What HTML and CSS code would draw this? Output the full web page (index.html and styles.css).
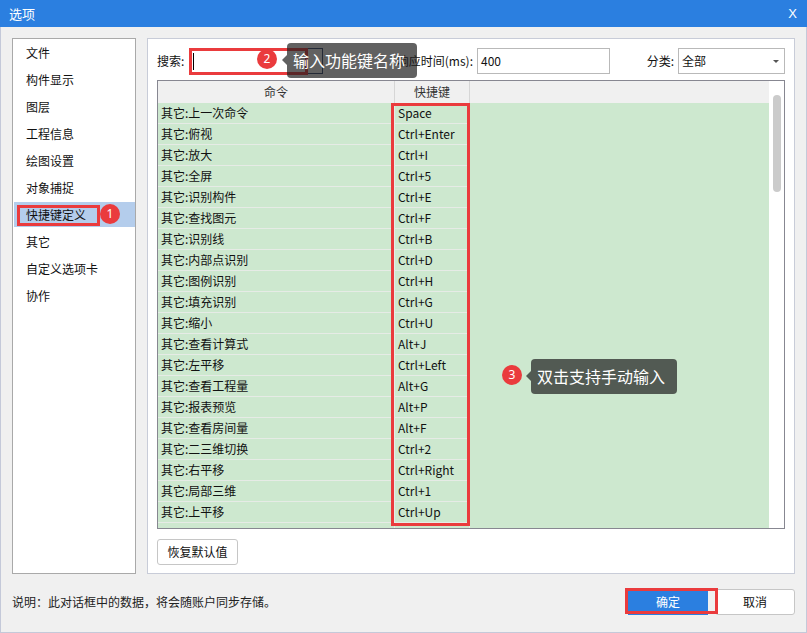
FILE: index.html
```html
<!DOCTYPE html>
<html lang="zh-CN">
<head>
<meta charset="utf-8">
<title>选项</title>
<link rel="stylesheet" href="styles.css">
</head>
<body>
<div class="window">
  <div class="titlebar"><span class="title">选项</span><span class="close">X</span></div>
  <div class="frame">
    <div class="main">
      <div class="nav">
        <div class="nav-item">文件</div>
        <div class="nav-item">构件显示</div>
        <div class="nav-item">图层</div>
        <div class="nav-item">工程信息</div>
        <div class="nav-item">绘图设置</div>
        <div class="nav-item">对象捕捉</div>
        <div class="nav-item active">快捷键定义<span class="mark nav-mark"></span><span class="badge nav-badge">1</span></div>
        <div class="nav-item">其它</div>
        <div class="nav-item">自定义选项卡</div>
        <div class="nav-item">协作</div>
      </div>
      <div class="panel">
        <div class="search-row">
          <span class="lbl lbl-search">搜索:</span>
          <div class="input input-search"><span class="caret"></span></div>
          <span class="lbl lbl-rt">响应时间(ms):</span>
          <div class="input input-rt">400</div>
          <span class="lbl lbl-cat">分类:</span>
          <div class="select">全部<span class="arrow"></span></div>
        </div>
        <div class="table">
          <div class="grid">
            <div class="thead">
              <div class="th th-cmd">命令</div>
              <div class="th th-key">快捷键</div>
              <div class="th th-rest"></div>
            </div>
            <div class="rows">
              <div class="row"><div class="td cmd">其它:上一次命令</div><div class="td key">Space</div><div class="td rest"></div></div>
              <div class="row"><div class="td cmd">其它:俯视</div><div class="td key">Ctrl+Enter</div><div class="td rest"></div></div>
              <div class="row"><div class="td cmd">其它:放大</div><div class="td key">Ctrl+I</div><div class="td rest"></div></div>
              <div class="row"><div class="td cmd">其它:全屏</div><div class="td key">Ctrl+5</div><div class="td rest"></div></div>
              <div class="row"><div class="td cmd">其它:识别构件</div><div class="td key">Ctrl+E</div><div class="td rest"></div></div>
              <div class="row"><div class="td cmd">其它:查找图元</div><div class="td key">Ctrl+F</div><div class="td rest"></div></div>
              <div class="row"><div class="td cmd">其它:识别线</div><div class="td key">Ctrl+B</div><div class="td rest"></div></div>
              <div class="row"><div class="td cmd">其它:内部点识别</div><div class="td key">Ctrl+D</div><div class="td rest"></div></div>
              <div class="row"><div class="td cmd">其它:图例识别</div><div class="td key">Ctrl+H</div><div class="td rest"></div></div>
              <div class="row"><div class="td cmd">其它:填充识别</div><div class="td key">Ctrl+G</div><div class="td rest"></div></div>
              <div class="row"><div class="td cmd">其它:缩小</div><div class="td key">Ctrl+U</div><div class="td rest"></div></div>
              <div class="row"><div class="td cmd">其它:查看计算式</div><div class="td key">Alt+J</div><div class="td rest"></div></div>
              <div class="row"><div class="td cmd">其它:左平移</div><div class="td key">Ctrl+Left</div><div class="td rest"></div></div>
              <div class="row"><div class="td cmd">其它:查看工程量</div><div class="td key">Alt+G</div><div class="td rest"></div></div>
              <div class="row"><div class="td cmd">其它:报表预览</div><div class="td key">Alt+P</div><div class="td rest"></div></div>
              <div class="row"><div class="td cmd">其它:查看房间量</div><div class="td key">Alt+F</div><div class="td rest"></div></div>
              <div class="row"><div class="td cmd">其它:二三维切换</div><div class="td key">Ctrl+2</div><div class="td rest"></div></div>
              <div class="row"><div class="td cmd">其它:右平移</div><div class="td key">Ctrl+Right</div><div class="td rest"></div></div>
              <div class="row"><div class="td cmd">其它:局部三维</div><div class="td key">Ctrl+1</div><div class="td rest"></div></div>
              <div class="row"><div class="td cmd">其它:上平移</div><div class="td key">Ctrl+Up</div><div class="td rest"></div></div>
              <div class="row"><div class="td cmd"></div><div class="td key"></div><div class="td rest"></div></div>
            </div>
          </div>
          <div class="vscroll"><div class="thumb"></div></div>
          <span class="mark key-mark"></span>
          <span class="badge badge-3">3</span>
          <div class="tip tip-3">双击支持手动输入</div>
        </div>
        <div class="btn restore">恢复默认值</div>
        <span class="mark search-mark"></span>
        <span class="badge badge-2">2</span>
        <div class="tip tip-2">输入功能键名称</div>
      </div>
    </div>
    <div class="footer">
      <span class="note">说明：此对话框中的数据，将会随账户同步存储。</span>
      <div class="actions">
        <div class="btn ok">确定</div>
        <div class="btn cancel">取消</div>
      </div>
      <span class="mark ok-mark"></span>
    </div>
  </div>
</div>
</body>
</html>
```

FILE: styles.css
```css
* { box-sizing: border-box; }

html, body {
  margin: 0;
  padding: 0;
}

body {
  font-family: "Noto Sans CJK SC", "Noto Sans", sans-serif;
  font-size: 12px;
  color: #111;
  background: #f0f0f0;
}

.window {
  width: 807px;
  height: 633px;
  display: flex;
  flex-direction: column;
  background: #f0f0f0;
}

.titlebar {
  height: 27px;
  flex: none;
  background: #2b7fe0;
  color: #fff;
  display: flex;
  align-items: center;
  justify-content: space-between;
  padding: 0 10px 0 9px;
}

.title {
  font-size: 13px;
  line-height: 27px;
}

.close {
  font-family: "Liberation Sans", sans-serif;
  font-size: 13px;
  line-height: 27px;
}

.frame {
  flex: 1;
  border: 1px solid #c4c9d9;
  border-top: none;
  padding: 11px 11px 0 11px;
  display: flex;
  flex-direction: column;
}

.main {
  height: 536px;
  display: flex;
  gap: 11px;
}

/* left navigation */
.nav {
  width: 124px;
  border: 1px solid #a9a9a9;
  background: #fff;
  padding-top: 1px;
}

.nav-item {
  position: relative;
  height: 25px;
  line-height: 25px;
  margin: 0 0 2px 1px;
  padding-left: 12px;
  white-space: nowrap;
}

.nav-item.active {
  background: #b4cdec;
}

/* right panel */
.panel {
  position: relative;
  flex: 1;
  border: 1px solid #c8ccd8;
  background: #fff;
  padding: 9px 9px 0 9px;
}

.search-row {
  height: 26px;
  display: flex;
  align-items: center;
}

.lbl {
  line-height: 26px;
  white-space: nowrap;
}

.lbl-search { width: 33px; }
.lbl-rt { width: 154px; text-align: right; padding-right: 4px; }
.lbl-cat { width: 68px; text-align: right; padding-right: 4px; }

.input {
  height: 26px;
  line-height: 24px;
  border: 1px solid #b9b9b9;
  padding-left: 3px;
  background: #fff;
}

.input-search {
  width: 133px;
  border-color: #2f4470;
  position: relative;
}

.caret {
  position: absolute;
  left: 2px;
  top: 4px;
  width: 1px;
  height: 17px;
  background: #000;
}

.input-rt { width: 133px; }

.select {
  position: relative;
  width: 107px;
  height: 26px;
  line-height: 24px;
  border: 1px solid #b9b9b9;
  padding-left: 3px;
  background: #fff;
}

.arrow {
  position: absolute;
  right: 5px;
  top: 11px;
  width: 0;
  height: 0;
  border-left: 3px solid transparent;
  border-right: 3px solid transparent;
  border-top: 3px solid #555;
}

/* table */
.table {
  position: relative;
  margin-top: 6px;
  height: 449px;
  border: 1px solid #878791;
  display: flex;
  background: #fff;
}

.grid {
  flex: 1;
  overflow: hidden;
  display: flex;
  flex-direction: column;
}

.thead {
  height: 22px;
  flex: none;
  display: grid;
  grid-template-columns: 237px 75px 1fr;
  background: #f0f0f0;
  color: #333;
}

.th {
  line-height: 22px;
  text-align: center;
}

.th-cmd, .th-key { border-right: 1px solid #d6d6d6; }

.rows {
  flex: 1;
  overflow: hidden;
  background: #cde8cf;
}

.row {
  display: grid;
  grid-template-columns: 237px 75px 1fr;
  height: 21px;
}

.td {
  line-height: 20px;
  white-space: nowrap;
  padding-left: 3px;
}

.td.cmd, .td.key {
  border-bottom: 1px solid #e6ebe6;
  border-right: 1px solid #e6ebe6;
}

.vscroll {
  width: 15px;
  flex: none;
  background: #fff;
  padding: 14px 0 0 4px;
}

.thumb {
  width: 8px;
  height: 97px;
  border-radius: 4px;
  background: #cbcbcb;
}

.btn {
  height: 26px;
  line-height: 24px;
  text-align: center;
  border: 1px solid #c6c6c6;
  border-radius: 3px;
  background: #fff;
}

.restore {
  margin-top: 10px;
  width: 81px;
}

/* footer */
.footer {
  position: relative;
  flex: 1;
  display: flex;
  justify-content: space-between;
  align-items: flex-start;
  padding-top: 15px;
}

.note {
  line-height: 26px;
  color: #222;
}

.actions {
  display: flex;
  gap: 7px;
}

.ok {
  width: 80px;
  background: #2b7fe0;
  border-color: #2b7fe0;
  border-radius: 0;
  color: #fff;
}

.cancel {
  width: 80px;
}

/* annotations */
.mark {
  position: absolute;
  border: 3px solid #ea3b3d;
}

.nav-mark { left: 3px; top: 3px; width: 83px; height: 21px; }
.search-mark { left: 41px; top: 9px; width: 119px; height: 27px; }
.key-mark { left: 233px; top: 22px; width: 79px; height: 423px; }
.ok-mark { left: 613px; top: 14px; width: 93px; height: 26px; }

.badge {
  position: absolute;
  width: 20px;
  height: 20px;
  border-radius: 50%;
  background: #ea3b3d;
  color: #fff;
  font-family: "Noto Sans", sans-serif;
  font-size: 12px;
  line-height: 20px;
  text-align: center;
}

.nav-badge { left: 86px; top: 2px; }
.badge-2 { left: 109px; top: 10px; }
.badge-3 { left: 344px; top: 284px; }

.tip {
  position: absolute;
  height: 35px;
  line-height: 35px;
  padding: 0 10px 0 6px;
  border-radius: 4px;
  background: rgba(30, 30, 30, 0.7);
  color: #fff;
  font-size: 16px;
  white-space: nowrap;
}

.tip::before {
  content: "";
  position: absolute;
  left: -5px;
  top: 12px;
  border-top: 5px solid transparent;
  border-bottom: 5px solid transparent;
  border-right: 5px solid rgba(30, 30, 30, 0.7);
}

.tip-2 { left: 139px; top: 4px; width: 130px; }
.tip-3 { left: 373px; top: 278px; width: 146px; }
```
